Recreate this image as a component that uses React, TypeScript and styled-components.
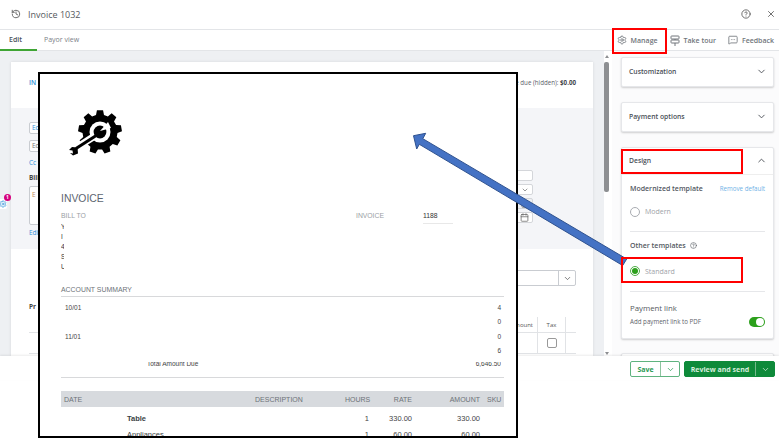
import React from "react";
import styled, { createGlobalStyle } from "styled-components";
import { History, CircleHelp, X, Settings, MessageSquareMore, ChevronDown, ChevronUp, Calendar } from "lucide-react";

const Global = createGlobalStyle`
  html, body { margin: 0; padding: 0; background: #fff; }
  * { box-sizing: border-box; }
`;
const Page = styled.div`
  position: relative; width: 779px; height: 440px; overflow: hidden; background: #fff;
  font-family: "Open Sans", "Liberation Sans", sans-serif; color: #4a4f57;
  display: flex; flex-direction: column;
`;
const Header = styled.header`
  height: 30px; flex: none; display: flex; align-items: center; padding: 0 0 1px 11px;
  border-bottom: 1px solid #e3e5e8; gap: 6px;
`;
const Title = styled.span`font-size: 9px; color: #555a60; flex: 1; margin-left: 1px;`;
const HeadIcon = styled.span`display: flex; width: 16px; justify-content: center; color: #555;`;
const HelpIcon = styled(HeadIcon)`margin-right: 3px;`;
const TabBar = styled.nav`
  height: 21px; flex: none; display: flex; align-items: stretch; border-bottom: 1px solid #e3e5e8;
`;
const Tab = styled.div<{ $active?: boolean }>`
  width: ${p => (p.$active ? 37 : 70)}px; padding-left: ${p => (p.$active ? 9 : 7)}px;
  font-size: 7px; line-height: 19px; color: ${p => (p.$active ? "#4a5058" : "#7c8188")};
  font-weight: ${p => (p.$active ? 600 : 400)};
  border-bottom: 2px solid ${p => (p.$active ? "#3fa535" : "transparent")};
  margin-bottom: -1px;
`;
const TabActions = styled.div`margin-left: auto; display: flex; align-items: center; gap: 12px; padding-right: 5px;`;
const TabAction = styled.span`display: flex; align-items: center; gap: 4px; font-size: 7px; color: #70757b; font-weight: 600;`;
const Main = styled.main`height: 305px; flex: none; display: flex; overflow: hidden;`;
const LeftPane = styled.section`
  width: 604px; flex: none; background: #eef0f3; padding: 11px 11px 0; overflow: hidden;
`;
const FormCard = styled.div`background: #fff; height: 100%; box-shadow: 0 0 3px rgba(0,0,0,.1);`;
const FormTop = styled.div`
  height: 46px; padding: 16px 17px 0 18px; display: flex; justify-content: space-between;
`;
const BlueText = styled.span`color: #2f8fd8; font-weight: 600; font-size: 6.5px;`;
const DueText = styled.span`color: #5b6068; font-size: 6.2px; b { color: #3f444a; }`;
const FormBlue = styled.div`
  height: 141px; background: #f4f5f8; padding: 14px 60px 0 18px; display: flex; justify-content: space-between;
`;
const FormCol = styled.div`display: flex; flex-direction: column; align-items: flex-start;`;
const FormColRight = styled(FormCol)`align-items: flex-end; padding-top: 48px; gap: 3px;`;
const SmallInput = styled.div<{ $blue?: boolean }>`
  width: 60px; height: 12px; background: #fff; border: 1px solid #c9ccd1; border-radius: 2px;
  font-size: 6.5px; line-height: 10px; padding-left: 2px; margin-bottom: 6px;
  color: ${p => (p.$blue ? "#2f8fd8" : "#777")};
`;
const LinkText = styled.span`color: #2f8fd8; font-size: 6.5px; line-height: 10px;`;
const Label = styled.span`font-size: 6.5px; font-weight: 700; color: #444; line-height: 10px; margin-top: 5px;`;
const TextBox = styled.div`
  width: 80px; height: 39px; background: #fff; border: 1px solid #c9ccd1; border-radius: 2px;
  font-size: 6.5px; padding: 3px 2px; color: #c08a5a; margin: 3px 0;
`;
const RightField = styled.div`
  width: 60px; height: 11px; background: #fff; border: 1px solid #d4d6da; border-radius: 2px;
  display: flex; justify-content: flex-end; align-items: center; padding-right: 3px; color: #666;
`;
const CalBox = styled(RightField)`background: #eef0f3;`;
const FormBottom = styled.div`padding: 21px 17px 0 18px;`;
const ProductRow = styled.div`display: flex; justify-content: flex-end;`;
const ProductSelect = styled.div`
  width: 100px; height: 16px; border: 1px solid #c9ccd1; border-radius: 2px; display: flex; justify-content: flex-end;
`;
const SelectEnd = styled.span`width: 17px; border-left: 1px solid #c9ccd1; display: flex; align-items: center; justify-content: center; color: #555;`;
const ProductLabel = styled.div`height: 31px; padding-top: 16px; font-size: 6.5px; line-height: 10px; font-weight: 700; color: #444;`;
const TableHead = styled.div`
  display: flex; justify-content: flex-end; height: 16px; font-size: 6px; color: #555;
  border-bottom: 1px solid #e1e3e6;
`;
const Cell = styled.span<{ $w: number }>`
  width: ${p => p.$w}px; border-left: 1px solid #e1e3e6; display: flex; align-items: center; justify-content: center;
`;
const AmountCell = styled.span`width: 28px; display: flex; align-items: center; justify-content: flex-end; padding-right: 4px;`;
const AmountBlank = styled.span`width: 28px;`;
const CheckRow = styled.div`display: flex; justify-content: flex-end; height: 21px; border-bottom: 1px solid #e1e3e6;`;
const CheckBox = styled.span`width: 10px; height: 10px; border: 1px solid #999; border-radius: 2px; background: #fff;`;
const ScrollTrack = styled.div`
  width: 8px; flex: none; background: #fff; padding: 4px 3px 0 0; display: flex; flex-direction: column; align-items: center;
`;
const ScrollThumb = styled.div`width: 5px; height: 130px; flex: none; background: #8d8f92; border-radius: 2px; margin-top: 4px;`;
const ArrowUp = styled.span`width: 0; height: 0; flex: none; border: 2px solid transparent; border-top: 0; border-bottom: 3px solid #8d8f92;`;
const ArrowDown = styled.span`width: 0; height: 0; flex: none; margin-top: auto; margin-bottom: 1px; border: 2px solid transparent; border-bottom: 0; border-top: 3px solid #8d8f92;`;
const SidePanel = styled.aside`
  flex: 1; background: #fbfbfc; padding: 6px 5px 0 9px; display: flex; flex-direction: column; gap: 15px; overflow: hidden;
`;
const PanelCard = styled.div`
  flex: none; background: #fff; border: 1px solid #e6e7ea; border-radius: 2px; box-shadow: 0 1px 2px rgba(0,0,0,.18);
`;
const LastCard = styled(PanelCard)`margin-top: -1px; height: 30px;`;
const CardHead = styled.div<{ $line?: boolean }>`
  height: 28px; display: flex; align-items: center; justify-content: space-between; padding: 0 6px 1px 7px;
  font-size: 6.8px; font-weight: 600; color: #4a4f57; ${p => (p.$line ? "border-bottom: 1px solid #eee; height: 27px;" : "")}
`;
const CardBody = styled.div`padding: 0 8px;`;
const RowBetween = styled.div`display: flex; justify-content: space-between; align-items: center; height: 25px; padding-top: 2px;`;
const SubTitle = styled.span`font-size: 7px; font-weight: 600; color: #53585f; display: inline-flex; align-items: center; gap: 4px;`;
const RemoveLink = styled.span`font-size: 6.2px; color: #6fb2e6;`;
const RadioRow = styled.div<{ $h: number; $up: number }>`
  display: flex; align-items: center; gap: 5px; height: ${p => p.$h}px; padding-bottom: ${p => p.$up}px; font-size: 7px; color: #9ea2a8;
`;
const Radio = styled.span<{ $on?: boolean }>`
  width: 10px; height: 10px; border-radius: 50%; border: 1px solid ${p => (p.$on ? "#4fae46" : "#a9acb1")};
  display: flex; align-items: center; justify-content: center; background: #fff;
  &::after { content: ""; width: 6px; height: 6px; border-radius: 50%; background: ${p => (p.$on ? "#2ca01c" : "transparent")}; }
`;
const Divider = styled.div`height: 1px; background: #e6e7ea;`;
const PayTitle = styled.div`font-size: 7.8px; color: #555a60; font-weight: 500; padding-top: 10px; line-height: 12px;`;
const PayRow = styled.div`display: flex; justify-content: space-between; align-items: center; font-size: 6.2px; color: #5e636a; padding-bottom: 9px; height: 24px;`;
const Toggle = styled.span`
  width: 16px; height: 10px; border-radius: 5px; background: #2ca01c; display: flex; justify-content: flex-end; align-items: center; padding-right: 1px;
  &::after { content: ""; width: 8px; height: 8px; border-radius: 50%; background: #fff; }
`;
const Footer = styled.footer`
  height: 24px; flex: none; background: #fff; display: flex; justify-content: flex-end; align-items: flex-start;
  gap: 4px; padding: 5px 4px 0 0; box-shadow: 0 -1px 2px rgba(0,0,0,.08); position: relative;
`;
const Split = styled.div<{ $solid?: boolean }>`
  height: 16px; display: flex; border-radius: 2px; overflow: hidden; font-size: 7px; font-weight: 700;
  border: 1px solid ${p => (p.$solid ? "#0e8a3a" : "#5fb37f")};
  background: ${p => (p.$solid ? "#0e8a3a" : "#fff")};
  color: ${p => (p.$solid ? "#d8eede" : "#2c9a55")};
`;
const SplitMain = styled.span<{ $w: number }>`width: ${p => p.$w}px; display: flex; align-items: center; justify-content: center;`;
const SplitEnd = styled.span`
  width: 19px; flex: none; display: flex; align-items: center; justify-content: center; border-left: 1px solid rgba(130,190,150,.9);
`;
const Doc = styled.div`
  position: absolute; left: 38px; top: 72px; width: 480px; height: 366px; background: #fff; border: 2px solid #000;
  overflow: hidden; padding: 0 0 0 21px; color: #666; font-family: "Liberation Sans", Arial, sans-serif;
`;
const LogoWrap = styled.div`height: 100px; padding: 36px 0 0 7px; svg { display: block; }`;
const DocTitle = styled.div`font-size: 10.4px; line-height: 14px; color: #5c6570; margin-top: 18px;`;
const BillRow = styled.div`display: flex; font-size: 6.8px; color: #9a9ea4; height: 12px; margin-top: 4px; line-height: 12px;`;
const BillTo = styled.span`width: 295px;`;
const InvLabel = styled.span`width: 67px;`;
const InvNum = styled.span`color: #333; border-bottom: 1px solid #e8e8e8; width: 30px; height: 14px;`;
const AddressLine = styled.div`font-size: 6.5px; line-height: 10px; color: #333; height: 10px; width: 3px; overflow: hidden;`;
const SummaryTitle = styled.div`
  font-size: 6.9px; line-height: 10px; color: #6d7278; margin-top: 13px; padding-bottom: 1px; width: 443px;
  border-bottom: 1px solid #d8d9db;
`;
const SumRows = styled.div`width: 443px; height: 81px; border-bottom: 1px solid #d8d9db; padding: 4px 3px 0 4px;`;
const SumRow = styled.div`
  display: flex; justify-content: space-between; height: 14.3px; font-size: 6.5px; line-height: 14px; color: #444;
`;
const ClippedRow = styled(SumRow)`height: 5px; line-height: 4px; overflow: hidden; margin-top: 4px;`;
const TotalLabel = styled.span`margin-left: 82px;`;
const TableHeader = styled.div`
  width: 443px; height: 16px; margin-top: 13px; background: #d7dade; display: flex; align-items: center; padding-left: 3px;
  font-size: 7px; color: #6d7278;
`;
const ColDate = styled.span`width: 191px;`;
const ColDesc = styled.span`width: 90px;`;
const ColHours = styled.span`width: 25px; text-align: right;`;
const ColRate = styled.span`width: 42px; text-align: right;`;
const ColAmount = styled.span`width: 68px; text-align: right;`;
const ColSku = styled.span`margin-left: 7px;`;
const ItemRow = styled.div`
  width: 443px; display: flex; align-items: center; height: 15px; padding-left: 66px; font-size: 7.5px; color: #444; margin-top: 1px;
`;
const FirstItemRow = styled(ItemRow)`margin-top: 4px;`;
const ItemName = styled.span<{ $strong?: boolean }>`width: 176px; font-weight: ${p => (p.$strong ? 700 : 400)}; color: #3b3f45;`;
const ItemHours = styled.span`width: 66px; text-align: right;`;
const ItemRate = styled.span`width: 43px; text-align: right;`;
const ItemAmount = styled.span`width: 68px; text-align: right;`;
const RedBox = styled.div<{ $x: number; $y: number; $w: number; $h: number }>`
  position: absolute; left: ${p => p.$x}px; top: ${p => p.$y}px; width: ${p => p.$w}px; height: ${p => p.$h}px;
  border: 2px solid #f00; pointer-events: none;
`;
const ArrowSvg = styled.svg`position: absolute; left: 0; top: 0; pointer-events: none;`;
const Widget = styled.div`
  position: absolute; left: 0; top: 199px; width: 7px; height: 10px; background: #fff; border-radius: 0 2px 2px 0;
  color: #2f8fd8; overflow: hidden; display: flex; align-items: center; justify-content: flex-end;
  svg { flex: none; }
`;
const Badge = styled.span`
  position: absolute; left: 4px; top: 194px; width: 7px; height: 7px; border-radius: 50%; background: #d5007f; color: #fff;
  font-size: 5px; line-height: 7px; text-align: center; font-weight: 700;
`;

function gearPath(cx: number, cy: number, ro: number, ri: number, teeth: number) {
  const pts: string[] = [];
  const step = (Math.PI * 2) / teeth;
  for (let i = 0; i < teeth; i++) {
    const a = i * step - Math.PI / 2;
    const list: [number, number][] = [
      [ri, a - step * 0.33], [ro, a - step * 0.2], [ro, a + step * 0.2], [ri, a + step * 0.33],
    ];
    for (const [r, t] of list) pts.push(`${(cx + r * Math.cos(t)).toFixed(2)} ${(cy + r * Math.sin(t)).toFixed(2)}`);
  }
  return "M" + pts.join("L") + "Z";
}

const Logo = () => (
  <svg width="56" height="48" viewBox="0 0 56 48">
    <path d={gearPath(32, 22, 22, 17.5, 9)} fill="#000" />
    <circle cx="32" cy="22" r="10.5" fill="#fff" />
    <path d="M5 40 L29 24.5" stroke="#fff" strokeWidth="7" />
    <path d="M8 38.5 L29 25" stroke="#000" strokeWidth="3" />
    <circle cx="32" cy="22" r="6.4" fill="#000" />
    <path d="M32 21 L40 12 L43 18 Z" fill="#fff" />
    <path d="M9.5 37.5 L4 37 L1 40 L4.5 40.5 L5 43.5 L2 43 L5 45.5 L10 43.5 Z" fill="#000" />
  </svg>
);

const TourIcon = () => (
  <svg width="10" height="11" viewBox="0 0 10 11" fill="none" stroke="currentColor" strokeWidth="1">
    <rect x="1" y="1" width="8" height="3" rx=".6" />
    <rect x="1" y="5" width="8" height="3" rx=".6" />
    <path d="M5 4v1M5 8v3" />
  </svg>
);

const Arrow = () => (
  <ArrowSvg width="779" height="440" viewBox="0 0 779 440">
    <polygon
      points="413.5,135.7 416.7,149 419.3,144.3 622.7,265.5 626.7,259 422.8,138.7 425.7,133.3"
      fill="#4472c4" stroke="#2f528f" strokeWidth="1"
    />
  </ArrowSvg>
);

export default function App() {
  return (
    <Page>
      <Global />
      <Header>
        <History size={10} color="#555" />
        <Title>Invoice 1032</Title>
        <HelpIcon><CircleHelp size={10} /></HelpIcon>
        <HeadIcon><X size={10} /></HeadIcon>
      </Header>
      <TabBar>
        <Tab $active>Edit</Tab>
        <Tab>Payor view</Tab>
        <TabActions>
          <TabAction><Settings size={10} />Manage</TabAction>
          <TabAction><TourIcon />Take tour</TabAction>
          <TabAction><MessageSquareMore size={10} />Feedback</TabAction>
        </TabActions>
      </TabBar>
      <Main>
        <LeftPane>
          <FormCard>
            <FormTop>
              <BlueText>IN</BlueText>
              <DueText>Balance due (hidden): <b>$0.00</b></DueText>
            </FormTop>
            <FormBlue>
              <FormCol>
                <SmallInput $blue>Edit</SmallInput>
                <SmallInput>Edit</SmallInput>
                <LinkText>Cc</LinkText>
                <Label>Bill to</Label>
                <TextBox>E</TextBox>
                <LinkText>Edit</LinkText>
              </FormCol>
              <FormColRight>
                <RightField />
                <RightField><ChevronDown size={8} /></RightField>
                <CalBox><Calendar size={8} /></CalBox>
                <RightField><Calendar size={9} /></RightField>
              </FormColRight>
            </FormBlue>
            <FormBottom>
              <ProductRow><ProductSelect><SelectEnd><ChevronDown size={9} /></SelectEnd></ProductSelect></ProductRow>
              <ProductLabel>Pr</ProductLabel>
              <TableHead>
                <AmountCell>Amount</AmountCell>
                <Cell $w={28}>Tax</Cell>
                <Cell $w={11} />
              </TableHead>
              <CheckRow>
                <AmountBlank />
                <Cell $w={28}><CheckBox /></Cell>
                <Cell $w={11} />
              </CheckRow>
            </FormBottom>
          </FormCard>
        </LeftPane>
        <ScrollTrack><ArrowUp /><ScrollThumb /><ArrowDown /></ScrollTrack>
        <SidePanel>
          <PanelCard>
            <CardHead>Customization<ChevronDown size={11} /></CardHead>
          </PanelCard>
          <PanelCard>
            <CardHead>Payment options<ChevronDown size={11} /></CardHead>
          </PanelCard>
          <PanelCard>
            <CardHead $line>Design<ChevronUp size={11} /></CardHead>
            <CardBody>
              <RowBetween><SubTitle>Modernized template</SubTitle><RemoveLink>Remove default</RemoveLink></RowBetween>
              <RadioRow $h={31} $up={8}><Radio />Modern</RadioRow>
              <Divider />
              <RowBetween><SubTitle>Other templates <CircleHelp size={7} /></SubTitle></RowBetween>
              <RadioRow $h={34} $up={6}><Radio $on />Standard</RadioRow>
              <Divider />
              <PayTitle>Payment link</PayTitle>
              <PayRow>Add payment link to PDF<Toggle /></PayRow>
            </CardBody>
          </PanelCard>
          <LastCard />
        </SidePanel>
      </Main>
      <Footer>
        <Split><SplitMain $w={29}>Save</SplitMain><SplitEnd><ChevronDown size={9} /></SplitEnd></Split>
        <Split $solid><SplitMain $w={70}>Review and send</SplitMain><SplitEnd><ChevronDown size={9} /></SplitEnd></Split>
      </Footer>

      <Widget><Settings size={8} /></Widget>
      <Badge>1</Badge>
      <Doc>
        <LogoWrap><Logo /></LogoWrap>
        <DocTitle>INVOICE</DocTitle>
        <BillRow><BillTo>BILL TO</BillTo><InvLabel>INVOICE</InvLabel><InvNum>1188</InvNum></BillRow>
        <AddressLine>Y</AddressLine>
        <AddressLine>I</AddressLine>
        <AddressLine>4</AddressLine>
        <AddressLine>S</AddressLine>
        <AddressLine>U</AddressLine>
        <SummaryTitle>ACCOUNT SUMMARY</SummaryTitle>
        <SumRows>
          <SumRow><span>10/01</span><span>4</span></SumRow>
          <SumRow><span></span><span>0</span></SumRow>
          <SumRow><span>11/01</span><span>0</span></SumRow>
          <SumRow><span></span><span>6</span></SumRow>
          <ClippedRow><TotalLabel>Total Amount Due</TotalLabel><span>6,646.50</span></ClippedRow>
        </SumRows>
        <TableHeader>
          <ColDate>DATE</ColDate><ColDesc>DESCRIPTION</ColDesc><ColHours>HOURS</ColHours>
          <ColRate>RATE</ColRate><ColAmount>AMOUNT</ColAmount><ColSku>SKU</ColSku>
        </TableHeader>
        <FirstItemRow><ItemName $strong>Table</ItemName><ItemHours>1</ItemHours><ItemRate>330.00</ItemRate><ItemAmount>330.00</ItemAmount></FirstItemRow>
        <ItemRow><ItemName>Appliances</ItemName><ItemHours>1</ItemHours><ItemRate>60.00</ItemRate><ItemAmount>60.00</ItemAmount></ItemRow>
      </Doc>
      <Arrow />
      <RedBox $x={612} $y={28} $w={55} $h={26} />
      <RedBox $x={621} $y={149} $w={122} $h={25} />
      <RedBox $x={621} $y={257} $w={122} $h={26} />
    </Page>
  );
}
